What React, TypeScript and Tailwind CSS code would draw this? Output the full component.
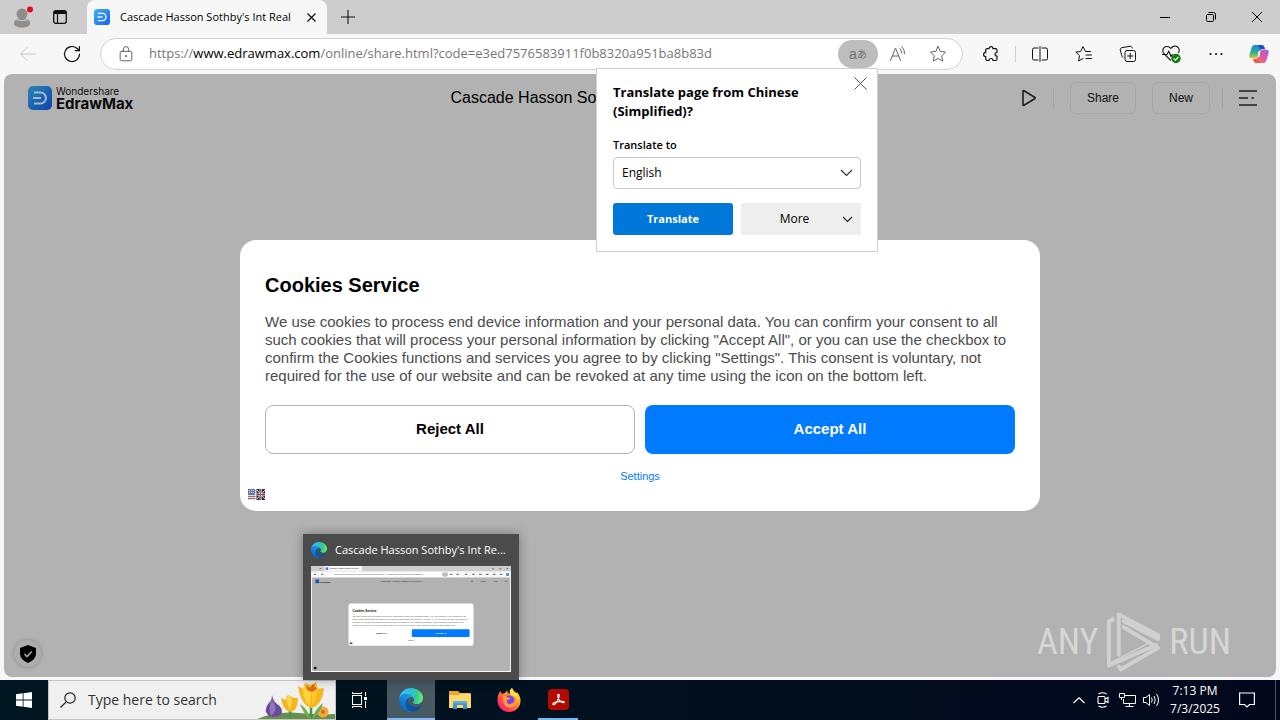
import type { ReactNode } from "react";

const ui = "font-['Open_Sans','Noto_Sans',sans-serif]";
const arial = "font-['Liberation_Sans',Arial,sans-serif]";

function Icon({ size = 20, children, className = "" }: { size?: number; children: ReactNode; className?: string }) {
  return (
    <svg
      width={size}
      height={size}
      viewBox="0 0 20 20"
      fill="none"
      stroke="currentColor"
      strokeWidth="1"
      strokeLinecap="round"
      strokeLinejoin="round"
      aria-hidden="true"
      className={`shrink-0 ${className}`}
    >
      {children}
    </svg>
  );
}

function EdrawLogo({ size, dim = false }: { size: number; dim?: boolean }) {
  const id = dim ? "edraw-dim" : "edraw";
  return (
    <svg width={size} height={size} viewBox="0 0 24 24" aria-hidden="true" className="shrink-0">
      <defs>
        <linearGradient id={id} x1="0" y1="0" x2="1" y2="1">
          <stop offset="0" stopColor={dim ? "#2b86b8" : "#3cb4fb"} />
          <stop offset="1" stopColor={dim ? "#0b44ad" : "#1560f0"} />
        </linearGradient>
      </defs>
      <rect width="24" height="24" rx="5" fill={`url(#${id})`} />
      <path
        d="M6 6.500H12.500A5.500 5.500 0 0 1 12.500 17.500H6"
        fill="none"
        stroke={dim ? "#a9b7c8" : "#fff"}
        strokeWidth="2"
      />
      <path d="M5 12H13" stroke={dim ? "#a9b7c8" : "#fff"} strokeWidth="2" />
    </svg>
  );
}

function EdgeLogo({ size, id }: { size: number; id: string }) {
  return (
    <svg width={size} height={size} viewBox="0 0 256 256" aria-hidden="true" className="shrink-0">
      <defs>
        <linearGradient id={`${id}a`} x1="60" y1="177" x2="241" y2="177" gradientUnits="userSpaceOnUse">
          <stop offset="0" stopColor="#0c59a4" />
          <stop offset="1" stopColor="#114a8b" />
        </linearGradient>
        <linearGradient id={`${id}b`} x1="157" y1="99" x2="46" y2="221" gradientUnits="userSpaceOnUse">
          <stop offset="0" stopColor="#1b9de2" />
          <stop offset=".5" stopColor="#1286d6" />
          <stop offset="1" stopColor="#0a6cc8" />
        </linearGradient>
        <linearGradient id={`${id}c`} x1="20" y1="80" x2="240" y2="110" gradientUnits="userSpaceOnUse">
          <stop offset="0" stopColor="#35c1f1" />
          <stop offset=".45" stopColor="#2cc2df" />
          <stop offset=".75" stopColor="#36c994" />
          <stop offset="1" stopColor="#66eb6e" />
        </linearGradient>
      </defs>
      <path
        fill={`url(#${id}a)`}
        d="M231 190.500c-3.400 1.800-6.900 3.400-10.500 4.700a101.700 101.700 0 0 1-35.900 6.500c-47.300 0-88.500-32.500-88.500-74.300 0-11.400 6.400-21.900 16.700-27.300-42.800 1.800-53.800 46.400-53.800 72.500 0 73.900 68.100 81.400 82.800 81.400 7.900 0 19.800-2.300 27-4.600l1.300-.4a128.300 128.300 0 0 0 66.600-52.800 4 4 0 0 0-5.700-5.700z"
      />
      <path
        fill={`url(#${id}b)`}
        d="M105.700 241.400A79.200 79.200 0 0 1 83 220.100a80.700 80.700 0 0 1 29.500-120c3.200-1.500 8.500-4.100 15.600-4a32.400 32.400 0 0 1 25.700 13 31.900 31.900 0 0 1 6.300 18.700c0-.2 24.500-79.600-80-79.600-43.900 0-80 41.700-80 78.200 0 19.300 4.200 38.400 12.300 56a128 128 0 0 0 156.400 67.100 75.500 75.500 0 0 1-63.100-8.100z"
      />
      <path
        fill={`url(#${id}c)`}
        d="M152.300 148.900c-.9 1-3.400 2.500-3.400 5.600 0 2.600 1.700 5.200 4.800 7.300 14.300 10 41.400 8.600 41.500 8.600 10.700 0 21.100-2.900 30.300-8.300A61.400 61.400 0 0 0 256 109.100c.3-22.400-8-37.300-11.300-43.900C223.500 23.900 177.700 0 128 0A128 128 0 0 0 0 126.200C.5 89.700 36.800 60.200 80 60.200c3.500 0 23.500.3 42 10.100 16.300 8.600 24.900 18.900 30.800 29.200 6.200 10.700 7.300 24.100 7.300 29.500 0 5.300-2.700 13.300-7.800 19.900z"
      />
    </svg>
  );
}

function TabStrip() {
  return (
    <header className="flex h-[34px] items-stretch bg-[#cdcdcd]">
      <button aria-label="Profile" className="flex w-11 items-center justify-center">
        <svg width="22" height="22" viewBox="0 0 22 22" aria-hidden="true">
          <circle cx="11" cy="8" r="5.500" fill="#918d8b" />
          <path d="M3 18c0-5 3-5.500 8-5.500s8 .5 8 5.500c0 1.500-3 3.500-8 3.500s-8-2-8-3.500Z" fill="#918d8b" />
          <path d="M4 13.600q7 2 14 0" stroke="#cdcdcd" strokeWidth="1" fill="none" />
          <circle cx="19" cy="3.500" r="3" fill="#e00b1c" />
        </svg>
      </button>
      <button aria-label="Tab actions" className="flex w-8 items-center justify-center">
        <svg width="14" height="14" viewBox="0 0 14 14" fill="none" stroke="#111" aria-hidden="true">
          <rect x=".7" y=".7" width="12.600" height="12.600" rx="2" strokeWidth="1.300" />
          <path d="M1 2.500H13" strokeWidth="3" />
          <path d="M4.500 3V13" strokeWidth="1.200" />
        </svg>
      </button>
      <div className="ml-[11px] flex w-60 items-center rounded-t-lg bg-[#f7f7f7] pl-[7px]">
        <EdrawLogo size={16} />
        <span className={`ml-2.5 flex-1 text-[11px] whitespace-nowrap text-black ${ui}`}>Cascade Hasson Sothby's Int Real</span>
        <button aria-label="Close tab" className="flex w-8 items-center justify-center">
          <svg width="9" height="9" viewBox="0 0 9 9" stroke="#111" strokeWidth="1.200" aria-hidden="true">
            <path d="M.5.5 8.500 8.500M8.500.5.5 8.500" />
          </svg>
        </button>
      </div>
      <button aria-label="New tab" className="flex w-[42px] items-center justify-center">
        <svg width="14" height="14" viewBox="0 0 14 14" stroke="#111" aria-hidden="true">
          <path d="M7 0V14M0 7H14" strokeWidth="1.100" />
        </svg>
      </button>
      <div className="ml-auto flex">
        <button aria-label="Minimize" className="flex w-[46px] items-center justify-center">
          <svg width="10" height="10" viewBox="0 0 10 10" stroke="#000" aria-hidden="true">
            <path d="M0 5.500H10" />
          </svg>
        </button>
        <button aria-label="Restore" className="flex w-[46px] items-center justify-center">
          <svg width="10" height="10" viewBox="0 0 10 10" stroke="#000" fill="none" aria-hidden="true">
            <rect x=".5" y="2.500" width="7" height="7" rx="1.200" />
            <path d="M2.500.5H7.500A2 2 0 0 1 9.500 2.500V7.500" />
          </svg>
        </button>
        <button aria-label="Close" className="flex w-[46px] items-center justify-center">
          <svg width="10" height="10" viewBox="0 0 10 10" stroke="#000" aria-hidden="true">
            <path d="M0 0 10 10M10 0 0 10" />
          </svg>
        </button>
      </div>
    </header>
  );
}

const star = "M10 2.500 12.300 7.400 17.600 8.100 13.700 11.800 14.700 17.100 10 14.500 5.300 17.100 6.300 11.800 2.400 8.100 7.700 7.400Z";

function ToolButton({ label, children }: { label: string; children: ReactNode }) {
  return (
    <button aria-label={label} className="flex w-11 items-center justify-center text-[#111]">
      {children}
    </button>
  );
}

function Toolbar() {
  return (
    <div className="flex h-10 items-center bg-[#f7f7f7]">
      <button aria-label="Back" disabled className="ml-1.5 flex w-11 items-center justify-center text-[#c9c9c9]">
        <Icon>
          <path d="M17.500 10H2.500M9 3.500 2.500 10 9 16.500" />
        </Icon>
      </button>
      <button aria-label="Refresh" className="flex w-11 items-center justify-center text-[#111]">
        <Icon>
          <path d="M17.500 10a7.500 7.500 0 1 1-2.400-5.500L17.300 6.500" strokeWidth="1.200" />
          <path d="M17.400 2.500V6.700H13.200" strokeWidth="1.200" />
        </Icon>
      </button>
      <div className="ml-1.5 flex h-8 flex-1 items-center rounded-full border border-[#d3d3d3] bg-white pr-1">
        <Icon className="ml-4 text-[#555]" size={18}>
          <rect x="3.500" y="7" width="13" height="10.500" rx="1.800" />
          <path d="M7 7V4.800a3 3 0 0 1 6 0V7" />
          <circle cx="10" cy="12.300" r=".6" fill="currentColor" />
        </Icon>
        <a
          href="https://www.edrawmax.com/online/share.html?code=e3ed7576583911f0b8320a951ba8b83d"
          className={`ml-3.5 flex-1 text-[13px] whitespace-nowrap text-[#767676] ${ui}`}
        >
          https://<span className="text-black">www.edrawmax.com</span>/online/share.html?code=e3ed7576583911f0b8320a951ba8b83d
        </a>
        <button
          aria-label="Show translate options"
          className="flex h-7 w-10 items-center justify-center rounded-full bg-[#bdbdbd] text-sm text-[#707070]"
        >
          <span className="font-['Liberation_Sans',sans-serif]">a</span>
          <span className="font-['Noto_Sans_CJK_JP',sans-serif] text-[10px]">あ</span>
        </button>
        <button aria-label="Read aloud" className="flex w-10 items-center justify-center text-[#666]">
          <Icon>
            <path d="M2.500 16.500 7.500 4 12.500 16.500M4.300 12H10.700" />
            <path d="M12 4.500q1.800 1.800 1.500 4.500M14 2.800q3 2.800 2.500 7" />
          </Icon>
        </button>
        <button aria-label="Add to favorites" className="flex w-10 items-center justify-center text-[#666]">
          <Icon>
            <path d={star} />
          </Icon>
        </button>
      </div>
      <div className="ml-1.5 flex items-center">
        <ToolButton label="Extensions">
          <Icon>
            <path d="M8 4.700a2 2 0 0 1 4 0H14.500A1.500 1.500 0 0 1 16 6.200V8.300a1.900 1.900 0 1 0 0 3.800V15A1.500 1.500 0 0 1 14.500 16.500H12a2 2 0 0 0-4 0H6.200A1.500 1.500 0 0 1 4.700 15V12.500a2.100 2.100 0 0 1 0-4.200V6.200A1.500 1.500 0 0 1 6.200 4.700Z" strokeWidth="1.200" />
          </Icon>
        </ToolButton>
        <span className="mr-0.5 ml-0.5 h-4 w-px bg-[#d0d0d0]" />
        <ToolButton label="Split screen">
          <Icon>
            <path d="M8 4H4A1.500 1.500 0 0 0 2.500 5.500V14.500A1.500 1.500 0 0 0 4 16H8M12 4H16A1.500 1.500 0 0 1 17.500 5.500V14.500A1.500 1.500 0 0 1 16 16H12M10 2.500V17.500" />
          </Icon>
        </ToolButton>
        <ToolButton label="Favorites">
          <Icon>
            <path d="M16.500 7.500H11.500L9 2.500 6.700 7.500 1.800 8.100 5.500 11.700 4.600 17 9 14.500M12 11H17.500M12 14.500H17.500" />
          </Icon>
        </ToolButton>
        <ToolButton label="Collections">
          <Icon>
            <rect x="7" y="6.500" width="10.500" height="11" rx="2" />
            <path d="M12.200 9.200V14.800M9.500 12H15M4.800 13.500C3.500 12.500 3.700 11 3 8.800L2.300 6C2 4.800 2.700 4 3.700 3.700L12 2.300C13.200 2.200 14 2.700 14.300 4" />
          </Icon>
        </ToolButton>
        <ToolButton label="Browser essentials">
          <svg width="22" height="20" viewBox="0 0 22 20" fill="none" stroke="#111" strokeWidth="1.100" aria-hidden="true">
            <path d="M9.800 16.500 3 9.700A4.200 4.200 0 0 1 9 3.700L9.800 4.500 10.600 3.700A4.200 4.200 0 0 1 17.300 9M1 10.500H6L7.800 7.300 10 12.500 11.500 10" />
            <circle cx="15" cy="14.500" r="4.700" fill="#107c10" stroke="none" />
            <path d="m12.700 14.500 1.700 1.700 3-3.200" stroke="#fff" />
          </svg>
        </ToolButton>
        <ToolButton label="Settings and more">
          <Icon>
            <g fill="currentColor" stroke="none">
              <circle cx="4.500" cy="10" r="1.100" />
              <circle cx="10" cy="10" r="1.100" />
              <circle cx="15.500" cy="10" r="1.100" />
            </g>
          </Icon>
        </ToolButton>
        <button aria-label="Copilot" className="flex w-[42px] items-center justify-center">
          <svg width="22" height="20" viewBox="0 0 22 22" aria-hidden="true">
            <defs>
              <linearGradient id="copA" x1="0" y1="0" x2="0" y2="1">
                <stop offset="0" stopColor="#1582d8" />
                <stop offset=".6" stopColor="#35b48c" />
                <stop offset="1" stopColor="#e8c82c" />
              </linearGradient>
              <linearGradient id="copB" x1="1" y1="0" x2="0" y2="1">
                <stop offset="0" stopColor="#a45ee8" />
                <stop offset=".5" stopColor="#e3589b" />
                <stop offset="1" stopColor="#ff8b3c" />
              </linearGradient>
            </defs>
            <path d="M6.500 1H14q2 0 2.700 2l.8 2.500h-3q-2 0-2.600 2L9.800 14q-.7 2-2.700 2H3Q-.5 15.500.4 12L3 3.500Q3.800 1 6.500 1Z" fill="url(#copA)" />
            <path d="M14 1q2 0 2.700 2l.8 2.500h-3q-1.700 0-2.400 1.300L11 3Q10.500 1 9 1Z" fill="#1f4fc4" />
            <path d="M15.500 21H8q-2 0-2.700-2l-.8-2.500h3q2 0 2.600-2L12.200 8q.7-2 2.700-2H19q3.500.5 2.600 4L19 18.500Q18.200 21 15.500 21Z" fill="url(#copB)" />
            <path d="M8 21q-2 0-2.700-2l-.8-2.500h3q1.700 0 2.400-1.300L11 19q.5 2 2 2Z" fill="#f05a4a" />
            <path d="M10.500 8h2L11.500 14h-2Z" fill="#f7f7f7" />
          </svg>
        </button>
      </div>
    </div>
  );
}

function SiteHeader() {
  return (
    <div className={`grid h-12 grid-cols-[1fr_384px_1fr] items-center pr-[19px] pl-6 text-black ${arial}`}>
      <a href="#home" className="flex items-center gap-1 justify-self-start">
        <EdrawLogo size={24} dim />
        <span className="flex flex-col font-['Inter',sans-serif] text-[#0a0a0a]">
          <span className="text-[10px] leading-[12px]">Wondershare</span>
          <span className="text-[15px] leading-[14px] font-bold">EdrawMax</span>
        </span>
      </a>
      <h1 className="truncate text-base">Cascade Hasson Sothby's Int Realty</h1>
      <div className="flex items-center justify-self-end">
        <button aria-label="Play" className="mr-3 flex w-6 justify-center">
          <svg width="16" height="18" viewBox="0 0 16 18" fill="none" stroke="#1f1f1f" strokeWidth="1.600" strokeLinejoin="round" aria-hidden="true">
            <path d="M2 2.300V15.700Q2 16.700 3 16.200L14 9.500Q14.500 9 14 8.500L3 1.800Q2 1.300 2 2.300Z" />
          </svg>
        </button>
        <span className="mr-4 h-5 w-px bg-[#a3a3a3]" />
        <button className="mr-4 h-8 rounded-md border border-[#a6a6a6] px-4 text-xs text-[#111]">Share</button>
        <button className="mr-3 h-8 rounded-md border border-[#a6a6a6] px-4 text-xs text-[#111]">New</button>
        <span className="mr-4 h-5 w-px bg-[#a3a3a3]" />
        <button aria-label="Menu">
          <svg width="18" height="18" viewBox="0 0 18 18" stroke="#1f1f1f" strokeWidth="1.600" aria-hidden="true">
            <path d="M0 2H18M0 9H9M12.500 9H15M0 16H18" />
          </svg>
        </button>
      </div>
    </div>
  );
}

function CookieDialog() {
  return (
    <section role="dialog" aria-labelledby="cookie-title" className={`w-[800px] max-w-full rounded-2xl bg-white pt-[33px] pb-[11px] ${arial}`}>
      <div className="px-[25px]">
        <h2 id="cookie-title" className="text-xl leading-6 font-bold text-black">
          Cookies Service
        </h2>
        <p className="mt-4 text-[15px] leading-[18px] text-[#4c4c4c]">
          We use cookies to process end device information and your personal data. You can confirm your consent to all such cookies that will
          process your personal information by clicking "Accept All", or you can use the checkbox to confirm the Cookies functions and services
          you agree to by clicking "Settings". This consent is voluntary, not required for the use of our website and can be revoked at any time
          using the icon on the bottom left.
        </p>
        <div className="mt-5 grid grid-cols-2 gap-2.5">
          <button className="h-[49px] rounded-lg border border-[#b3b3b3] bg-white text-[15px] font-bold text-black">Reject All</button>
          <button className="h-[49px] rounded-lg bg-[#007aff] text-[15px] font-bold text-white">Accept All</button>
        </div>
        <div className="mt-3.5 text-center text-[11px] leading-4">
          <a href="#settings" className="text-[#007aff]">
            Settings
          </a>
        </div>
      </div>
      <button aria-label="Language" className="mt-[5px] ml-2 block">
        <svg width="17" height="11" viewBox="0 0 17 11" aria-hidden="true">
          <rect width="17" height="11" fill="#ddd" />
          <path d="M0 7.500H8M0 9.500H8M5 1.500H8M5 3.500H8" stroke="#b0656d" />
          <path d="M0 0H7V6H0Z" fill="#6478a8" />
          <path d="M1 1.500H7M1 3.500H7" stroke="#cdd6ec" strokeDasharray="1 1" />
          <path d="M7.500 0H8.500V11H7.500Z" fill="#fff" />
          <path d="M8.500 0H17V11H8.500Z" fill="#2c2c40" />
          <path d="M9 1 17 10M17 1 9 10" stroke="#d8d8e0" />
          <path d="M12.700 0V11M8.500 5.500H17" stroke="#eee" strokeWidth="2" />
          <path d="M12.700 0V11M8.500 5.500H17" stroke="#9c4a55" />
        </svg>
      </button>
    </section>
  );
}

function TranslatePopup() {
  return (
    <section
      aria-label="Translate"
      className={`absolute top-[68px] left-[596px] w-[282px] border border-[#d0d0d0] bg-white px-4 pt-3.5 pb-4 text-black ${ui}`}
    >
      <button aria-label="Close" className="absolute top-2 right-2.5">
        <svg width="13" height="13" viewBox="0 0 13 13" stroke="#555" aria-hidden="true">
          <path d="M.5.5 12.500 12.500M12.500.5.5 12.500" />
        </svg>
      </button>
      <h2 className="text-[13px] leading-[19px] font-bold">
        Translate page from Chinese
        <br />
        (Simplified)?
      </h2>
      <label htmlFor="lang" className="mt-4 block text-[11px] leading-4 font-semibold">
        Translate to
      </label>
      <div className="relative mt-1">
        <select id="lang" className="h-8 w-full appearance-none rounded-sm border border-[#c8c8c8] bg-white px-2 text-xs">
          <option>English</option>
        </select>
        <svg className="pointer-events-none absolute top-3 right-2" width="13" height="8" viewBox="0 0 13 8" fill="none" stroke="#333" strokeWidth="1.200" aria-hidden="true">
          <path d="M1 1 6.500 6.500 12 1" />
        </svg>
      </div>
      <div className="mt-3.5 grid grid-cols-2 gap-2">
        <button className="h-8 rounded-[3px] bg-[#0078d9] text-[11px] font-bold text-white">Translate</button>
        <button className="flex h-8 items-center rounded-[3px] bg-[#eeeeee] pr-2 text-xs">
          <span className="flex-1 pl-1.5">More</span>
          <svg width="11" height="7" viewBox="0 0 11 7" fill="none" stroke="#222" strokeWidth="1.200" aria-hidden="true">
            <path d="M1 1 5.500 5.500 10 1" />
          </svg>
        </button>
      </div>
    </section>
  );
}

function WindowThumbnail() {
  return (
    <svg viewBox="0 0 1280 680" className="block w-full" aria-hidden="true" fontFamily="Liberation Sans, sans-serif">
      <rect width="1280" height="680" fill="#f7f7f7" />
      <rect width="1280" height="34" fill="#cdcdcd" />
      <rect x="87" width="240" height="34" fill="#f7f7f7" />
      <rect x="100" y="38" width="863" height="32" rx="16" fill="#fff" />
      <rect x="6" y="74" width="1268" height="598" rx="8" fill="#b2b2b2" />
      <rect x="94" y="9" width="16" height="16" fill="#1d7cf2" />
      <rect x="28" y="86" width="24" height="24" fill="#1758b5" />
      <g fill="#222" fontSize="14">
        <text x="120" y="22" fontSize="12">Cascade Hasson Sothby's Int Real</text>
        <text x="149" y="60" fill="#555">https://www.edrawmax.com/online/share.html?code=e3ed7576583911f0b8320a951ba8b83d</text>
        <text x="56" y="108" fontWeight="bold">EdrawMax</text>
        <text x="450" y="103" fontSize="16">Cascade Hasson Sothby's Int Realty</text>
        <text x="1088" y="102" fontSize="12">Share</text>
        <text x="1170" y="102" fontSize="12">New</text>
      </g>
      <ellipse cx="858" cy="54" rx="20" ry="14" fill="#bdbdbd" />
      <path d="M890 54H906M930 54H946M985 54H1000M1032 54H1048M1076 54H1092M1120 54H1136M1165 54H1181M1208 54H1224M1240 98H1256M1024 98H1036M20 54H32M66 54H78M54 17H66M1160 17H1170M1206 17H1216M1252 17H1262" stroke="#777" strokeWidth="8" />
      <rect x="1248" y="44" width="20" height="20" rx="5" fill="#5c8bd0" />
      <rect x="240" y="240" width="800" height="271" rx="16" fill="#fff" />
      <g fill="#4c4c4c" fontSize="15">
        <text x="265" y="292" fill="#000" fontSize="20" fontWeight="bold">Cookies Service</text>
        <text x="265" y="327">We use cookies to process end device information and your personal data. You can confirm your consent to all</text>
        <text x="265" y="345">such cookies that will process your personal information by clicking "Accept All", or you can use the checkbox to</text>
        <text x="265" y="363">confirm the Cookies functions and services you agree to by clicking "Settings". This consent is voluntary, not</text>
        <text x="265" y="381">required for the use of our website and can be revoked at any time using the icon on the bottom left.</text>
        <text x="417" y="435" fill="#000" fontWeight="bold">Reject All</text>
      </g>
      <rect x="645" y="405" width="370" height="49" rx="8" fill="#007aff" />
      <text x="795" y="435" fill="#fff" fontSize="15" fontWeight="bold">Accept All</text>
      <text x="620" y="480" fill="#333" fontSize="11">Settings</text>
      <rect x="248" y="489" width="17" height="11" fill="#555" />
      <circle cx="27" cy="653" r="9" fill="#111" />
    </svg>
  );
}

function TaskPreview() {
  return (
    <aside className={`absolute bottom-10 left-[303px] w-[216px] bg-[#4b4b4b] px-2 pb-2 shadow-[0_0_10px_rgba(0,0,0,0.35)] ${ui}`}>
      <div className="flex h-8 items-center gap-2">
        <EdgeLogo size={16} id="ep" />
        <span className="text-[11px] whitespace-nowrap text-white">Cascade Hasson Sothby's Int Re...</span>
      </div>
      <WindowThumbnail />
    </aside>
  );
}

function Watermark() {
  return (
    <div
      className="absolute right-[45px] bottom-1 flex items-center gap-2 font-['Liberation_Sans_Narrow','Roboto_Condensed',sans-serif] text-4xl leading-none text-[#d6d6d6]"
      aria-label="ANY RUN"
    >
      <span>ANY</span>
      <svg width="55" height="62" viewBox="0 0 56 62" fill="none" stroke="#d0d0d0" strokeWidth="4" strokeLinejoin="round" strokeLinecap="round" aria-hidden="true">
        <path d="M7 8 3 10V55L51 34" />
        <path d="M13 44V3L53 24V28L18 10" />
        <path d="M18 16 53 37 15 59 13 56" />
        <path d="M5 52 42 33" strokeWidth="1.500" />
      </svg>
      <span>RUN</span>
    </div>
  );
}

function Flowers() {
  return (
    <svg width="80" height="38" viewBox="0 0 80 38" className="ml-auto self-end" aria-hidden="true">
      <path d="M2 38Q22 30 44 32T80 33V38Z" fill="#66904f" />
      <path d="M17 14Q17 20 13 23Q8 30 14 35Q20 37 26 34Q29 27 22 23Q18 20 17 14Z" fill="#6b4a98" />
      <path d="M17 18Q13 27 16 35Q23 30 19 22Z" fill="#9274bd" />
      <path d="M35 30V38M56 24V38" stroke="#4d963d" strokeWidth="2.500" />
      <path d="M26 17 30 19 33 14 37 16 39 17 43 17Q43 29 36 31Q28 30 26 17Z" fill="#f3b61f" />
      <path d="M31 18 34 14 37 19 35 30Z" fill="#ffd54a" />
      <path d="M43 5 48 8 50 2 56 4 61 1 63 8 69 7Q67 24 57 27Q46 25 43 5Z" fill="#f6b51d" />
      <path d="M48 8 51 3 56 9 55 25Q48 20 48 8Z" fill="#ffd33d" />
      <path d="M56 9 61 3 63 10 58 25Z" fill="#ffc42e" />
      <path d="M51 4 55 7 58 3 62 8 57 11 52 9Z" fill="#e06a18" />
      <circle cx="68" cy="31" r="5.500" fill="#f5a93b" />
      <circle cx="68" cy="31" r="2" fill="#d96a1c" />
      <path d="M45 23Q53 28 55 38Q48 32 45 23ZM68 22Q60 28 57 38Q66 32 68 22Z" fill="#6cb14d" />
    </svg>
  );
}

function TaskButton({ label, children, active = false }: { label: string; children: ReactNode; active?: boolean }) {
  return (
    <button aria-label={label} className={`flex w-12 items-center justify-center ${active ? "border-b-2 border-[#83b9ec] bg-[#475963] pt-0.5" : ""}`}>
      {children}
    </button>
  );
}

function Taskbar() {
  return (
    <footer className={`flex h-10 items-stretch bg-linear-to-r from-[#001620] to-[#02081c] text-white ${ui}`}>
      <TaskButton label="Start">
        <svg width="16" height="16" viewBox="0 0 16 16" fill="#fff" aria-hidden="true">
          <path d="M0 2.200 6.700 1.300V7.500H0ZM7.500 1.200 16 0V7.500H7.500ZM0 8.400H6.700V14.700L0 13.800ZM7.500 8.400H16V16L7.500 14.800Z" />
        </svg>
      </TaskButton>
      <label className="flex w-72 items-center border border-[#c4c4c4] bg-[#f0f0f0] pl-[11px] text-[#333]">
        <svg width="16" height="16" viewBox="0 0 16 16" fill="none" stroke="#222" strokeWidth="1.200" aria-hidden="true">
          <circle cx="10" cy="6" r="5.200" />
          <path d="M6.200 9.800.5 15.500" />
        </svg>
        <input type="text" aria-label="Search" placeholder="Type here to search" className="ml-3 w-36 bg-transparent text-sm placeholder:text-[#333] placeholder:opacity-100" />
        <Flowers />
      </label>
      <TaskButton label="Task View">
        <svg width="18" height="18" viewBox="0 0 18 18" fill="none" stroke="#fff" aria-hidden="true">
          <rect x="1.500" y="4.500" width="9" height="9" />
          <path d="M1.500 1V2.500H10.500V1M1.500 17V15.500H10.500V17M14.500 1V5M14.500 10V17" />
          <path d="M13 6H16V9H13Z" fill="#fff" stroke="none" />
        </svg>
      </TaskButton>
      <div className="ml-[3px] flex gap-px">
        <TaskButton label="Microsoft Edge" active>
          <EdgeLogo size={24} id="et" />
        </TaskButton>
        <TaskButton label="File Explorer">
          <svg width="22" height="20" viewBox="0 0 22 20" aria-hidden="true">
            <path d="M0 1H9L11 3H21V17H0Z" fill="#e8a92e" />
            <path d="M0 5H9L11 3.500H22V18H0Z" fill="#fbd96c" />
            <path d="M4 19V12.500Q4 11 5.500 11H16.500Q18 11 18 12.500V19H14V15H8V19Z" fill="#3c93d3" />
            <path d="M4 12.500Q4 11 5.500 11H16.500Q18 11 18 12.500V13.500H4Z" fill="#5eb0e4" />
          </svg>
        </TaskButton>
        <TaskButton label="Firefox">
          <svg width="24" height="24" viewBox="0 0 24 24" aria-hidden="true">
            <defs>
              <linearGradient id="ffx" x1="1" y1="0" x2=".1" y2="1">
                <stop offset="0" stopColor="#fff44f" />
                <stop offset=".35" stopColor="#ffa62b" />
                <stop offset=".7" stopColor="#ff4a48" />
                <stop offset="1" stopColor="#e31587" />
              </linearGradient>
            </defs>
            <path d="M3.500 3Q4 5 5 6Q6.500 5 8 5Q9 3 10.500 2.500Q10 4 11.500 5.500L13 6Q12 2 15 0Q16 3 19 5Q20 5 20 4Q24 9 23.500 13A11.500 11 0 0 1 .5 13Q0 7 3.500 3Z" fill="url(#ffx)" />
            <circle cx="12" cy="12.500" r="5.300" fill="#7542e5" />
            <path d="M6 8Q9 7 11 9.500L14 10Q12 12 10 12Q9 15 12 16Q16 16 17.500 13Q18 9 15 7Q21 9 19.500 15Q17 20 12 19.500Q6 18 6 12Z" fill="#ff9640" />
            <path d="M13 6Q12 2 15 0Q16 3 19 5Q22 10 21 14Q20 9 16.500 8Z" fill="#ffdf3e" />
          </svg>
        </TaskButton>
        <button aria-label="Adobe Acrobat" className="flex w-12 flex-col items-center justify-end gap-2">
          <svg width="21" height="21" viewBox="0 0 22 22" aria-hidden="true">
            <rect width="22" height="22" rx="4" fill="#b30b00" />
            <path d="M5 15.800C4.600 14 11 12.500 16.300 13.200C18.500 14.200 15.500 15.500 12.500 12.500C10 9.800 9.700 5.500 11 5.500C12.500 5.500 11.300 10 9.500 13C7.500 16.300 5.400 17.200 5 15.800Z" fill="none" stroke="#fff" strokeWidth="1.200" />
          </svg>
          <span className="h-0.5 w-10 bg-[#76b9ed]" />
        </button>
      </div>
      <div className="ml-auto flex items-center">
        <button aria-label="Show hidden icons" className="flex w-6 justify-center">
          <svg width="12" height="7" viewBox="0 0 12 7" fill="none" stroke="#fff" strokeWidth="1.200" aria-hidden="true">
            <path d="M.5 6 6 .8 11.500 6" />
          </svg>
        </button>
        <button aria-label="Meet now" className="flex w-6 justify-center">
          <svg width="14" height="18" viewBox="0 0 14 18" fill="none" stroke="#fff" strokeWidth="1.100" aria-hidden="true">
            <rect x="2" y="5.500" width="7" height="7" rx="1" />
            <path d="M9 8 12 6.500V11.500L9 10M2.500 3Q6.500.5 10.500 3M2.500 15Q6.500 17.500 10.500 15" />
          </svg>
        </button>
        <button aria-label="Network" className="flex w-6 justify-center">
          <svg width="17" height="16" viewBox="0 0 17 16" fill="none" stroke="#fff" aria-hidden="true">
            <path d="M6 3.500H16.500V11.500H4.500V7M10.500 11.500V14.500M6.500 14.500H14.500M.5 1.500H5.500V5.500H.5ZM2.500 5.500V8" />
          </svg>
        </button>
        <button aria-label="Volume" className="flex w-6 justify-center">
          <svg width="17" height="14" viewBox="0 0 17 14" fill="none" stroke="#fff" aria-hidden="true">
            <path d="M.5 4.500H3L6.500 1.500V12.500L3 9.500H.5ZM8.500 4.500Q10 7 8.500 9.500M11 3Q13.500 7 11 11M13.500 1Q17.500 7 13.500 13" />
          </svg>
        </button>
        <div className="flex w-16 flex-col items-center text-xs leading-[18px] whitespace-nowrap">
          <span>7:13 PM</span>
          <span>7/3/2025</span>
        </div>
        <button aria-label="Notifications" className="flex w-10 justify-center">
          <svg width="16" height="16" viewBox="0 0 16 16" fill="none" stroke="#fff" strokeWidth="1.200" aria-hidden="true">
            <path d="M.6 1H15.400V12.500H10.500L8 15 5.500 12.500H.6Z" />
          </svg>
        </button>
        <span className="mr-1 ml-2 h-10 w-px bg-[#4a5264]" />
      </div>
    </footer>
  );
}

export default function App() {
  return (
    <div className="relative flex min-h-screen flex-col overflow-hidden bg-[#f7f7f7]">
      <TabStrip />
      <Toolbar />
      <main className="relative mx-1 mb-[3px] flex flex-1 flex-col rounded-lg bg-[#b2b2b2]">
        <SiteHeader />
        <div className="pointer-events-none absolute inset-0 grid place-items-center *:pointer-events-auto">
          <CookieDialog />
        </div>
        <button aria-label="Privacy" className="absolute bottom-2.5 left-2.5 flex size-[27px] items-center justify-center rounded-full bg-[#adadad] shadow-[0_0_4px_#888]">
          <svg width="16" height="18" viewBox="0 0 16 18" aria-hidden="true">
            <path d="M8 0 16 3V9Q15.500 15 8 18Q.5 15 0 9V3Z" fill="#000" />
            <path d="m4.500 9 2.500 2.500 4.800-5" fill="none" stroke="#aaa" strokeWidth="1.600" />
          </svg>
        </button>
        <Watermark />
      </main>
      <Taskbar />
      <TranslatePopup />
      <TaskPreview />
    </div>
  );
}
